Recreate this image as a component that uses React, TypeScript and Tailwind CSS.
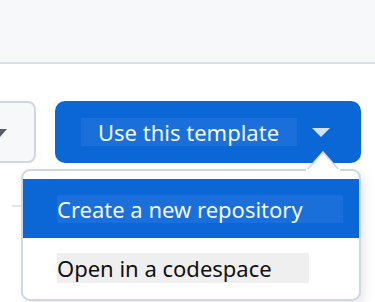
import React from "react";

export default function App() {
  return (
    <div
      className="relative w-[375px] h-[302px] overflow-hidden bg-white"
      style={{ fontFamily: '"Noto Sans", "Open Sans", sans-serif' }}
    >
      <div className="h-[62px] bg-[#f6f8fa] border-b-2 border-[#d8dee4] box-content" />
      <div className="flex items-start mt-[37px]">
        <div className="relative -ml-[24px] w-[60px] h-[62px] rounded-[8px] border-2 border-[#d0d7de] bg-[#f6f8fa] box-border">
          <div className="absolute left-[13px] top-[26px] w-0 h-0 border-l-[8px] border-r-[8px] border-t-[9px] border-l-transparent border-r-transparent border-t-[#57606a]" />
        </div>
        <div className="ml-[19px] w-[306px] h-[62px] rounded-[10px] bg-[#0b66d6] flex items-center pl-[26px]">
          <span className="h-[28px] flex items-center pl-[17px] pr-[18px] bg-[#1a6fda] text-[22px] leading-[28px] text-[#f3f8fe]">
            Use this template
          </span>
          <div className="ml-[15px] w-0 h-0 border-l-[9px] border-r-[9px] border-t-[9px] border-l-transparent border-r-transparent border-t-[#d3e3f7]" />
        </div>
      </div>
      <div className="absolute left-[12px] top-[205px] w-[12px] h-[2px] bg-[#e1e4e8]" />
      {/* menu */}
      <div className="absolute left-[21px] top-[169px] w-[340px] h-[132px] rounded-[9px] border-2 border-[#d0d7de] bg-white shadow-[4px_4px_10px_rgba(140,149,159,0.2)] pt-[8px]">
        <div className="h-[59px] bg-[#0b66d6] flex items-center pl-[34px]">
          <span className="h-[28px] flex items-center pr-[40px] bg-[#1a6fda] text-[22px] leading-[28px] text-[#f3f8fe]">
            Create a new repository
          </span>
        </div>
        <div className="h-[59px] flex items-center pl-[34px]">
          <span className="h-[30px] flex items-center pr-[37px] bg-[#efefef] text-[22px] leading-[30px] text-[#111111]">
            Open in a codespace
          </span>
        </div>
      </div>
      {/* pointer */}
      <svg className="absolute left-[306px] top-[151px]" width="34" height="20" viewBox="0 0 34 20">
        <polygon points="1,19 17,1 33,19" fill="#ffffff" stroke="#d0d7de" strokeWidth="1.5" />
        <rect x="0" y="18" width="34" height="2" fill="#ffffff" />
      </svg>
    </div>
  );
}
